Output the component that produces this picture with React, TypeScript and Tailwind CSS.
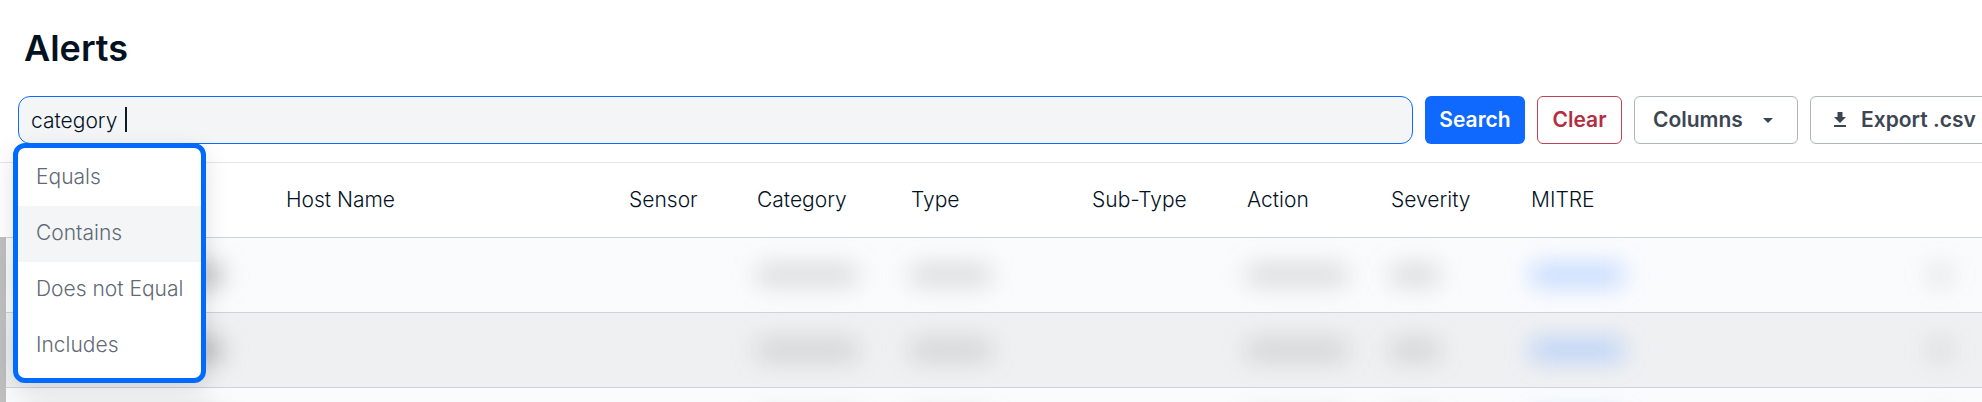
import { useState } from 'react';

const OPERATORS = ['Equals', 'Contains', 'Does not Equal', 'Includes'];

const COLUMNS = ['', 'Host Name', 'Sensor', 'Category', 'Type', 'Sub-Type', 'Action', 'Severity', 'MITRE', ''];

const ROWS = [
  { id: 1, bg: 'bg-[#fafbfd]' },
  { id: 2, bg: 'bg-[#eff0f2]' },
  { id: 3, bg: 'bg-[#fafbfd]' },
];

// Hidden values, one per column
const REDACTED = [
  'w-49 bg-neutral-500/50',
  '',
  '',
  'w-25 bg-neutral-500/25',
  'w-20 bg-neutral-500/25',
  '',
  'w-25 bg-neutral-500/25',
  'w-12 bg-neutral-500/25',
  'w-23 bg-blue-500/30',
  'w-5 ml-auto mr-2 bg-neutral-500/20',
];

function CaretIcon() {
  return (
    <svg width="10" height="5" viewBox="0 0 10 5" fill="currentColor" aria-hidden="true">
      <path d="M0 0h10L5 5z" />
    </svg>
  );
}

function DownloadIcon() {
  return (
    <svg width="14" height="16" viewBox="0 0 14 16" fill="currentColor" aria-hidden="true">
      <path d="M4.5 0h5v5H13l-6 6-6-6h3.5z M1 13h12v2H1z" />
    </svg>
  );
}

export default function App() {
  const [query, setQuery] = useState('category ');
  const [active, setActive] = useState('Contains');

  return (
    <div className="h-screen overflow-hidden bg-white font-[Inter,sans-serif] text-[21px] leading-7 text-[#04121f]">
      <h1 className="pt-6 pl-6 text-4xl leading-12 font-semibold">Alerts</h1>

      <div className="mt-6 flex gap-3 pl-[18px]">
        <div className="relative min-w-0 flex-1">
          <input
            type="text"
            aria-label="Search alerts"
            className="h-12 w-full rounded-xl border border-[#0f69ff] bg-[#f4f5f7] px-3 font-light caret-transparent outline-none"
            value={query}
            onChange={(e) => setQuery(e.target.value)}
          />
          <span className="absolute top-[11px] left-[107px] h-[25px] w-0.5 bg-[#0c1b2a]" />
          <div
            role="listbox"
            aria-label="Operators"
            className="absolute top-[47px] -left-[5px] z-10 w-[193px] rounded-xl border-5 border-[#006aff] bg-white pt-0.5 pb-1 shadow-[0_8px_24px_rgba(0,0,0,0.12)]"
          >
            {OPERATORS.map((op) => (
              <button
                key={op}
                role="option"
                aria-selected={op === active}
                className={`block h-14 w-full pb-0.5 pl-[18px] text-left font-light whitespace-nowrap text-[#5f6a75] ${
                  op === active ? 'bg-[#f4f5f7]' : ''
                }`}
                onMouseEnter={() => setActive(op)}
                onClick={() => setQuery(`${query}${op} `)}
              >
                {op}
              </button>
            ))}
          </div>
        </div>
        <button className="h-12 w-[100px] rounded-md bg-[#0f69ff] font-semibold text-white">Search</button>
        <button className="h-12 w-[85px] rounded-md border border-[#bf4258] font-semibold text-[#b32d42]">Clear</button>
        <button className="flex h-12 w-[164px] items-center gap-5 rounded-md border border-[#adb4be] pl-[18px] font-semibold text-[#3c4653]">
          Columns
          <CaretIcon />
        </button>
        <button className="-mr-4 flex h-12 w-[188px] shrink-0 items-center gap-3.5 rounded-md border border-[#adb4be] pl-[22px] font-semibold whitespace-nowrap text-[#3c4653]">
          <DownloadIcon />
          Export .csv
        </button>
      </div>

      <div className="mt-[18px] border-t border-[#e4e6e8]">
        <table className="w-full table-fixed border-collapse">
          <colgroup>
            <col className="w-[259px]" />
            <col className="w-[343px]" />
            <col className="w-32" />
            <col className="w-[154px]" />
            <col className="w-[181px]" />
            <col className="w-[155px]" />
            <col className="w-36" />
            <col className="w-[140px]" />
            <col className="w-40" />
            <col />
          </colgroup>
          <thead>
            <tr className="h-[74px] border-b border-[#d0d3d6]">
              {COLUMNS.map((name, i) => (
                <th key={i} className="px-6 text-left font-light whitespace-nowrap">
                  {name}
                </th>
              ))}
            </tr>
          </thead>
          <tbody>
            {ROWS.map((row) => (
              <tr key={row.id} className={`h-[75px] border-b border-[#d0d3d6] ${row.bg}`}>
                {REDACTED.map((shape, i) => (
                  <td key={i} className={i === 0 ? 'border-l-6 border-[#bfbfbf] pl-5' : 'px-6'}>
                    {shape && <div className={`h-5 blur-[12px] ${shape}`} />}
                  </td>
                ))}
              </tr>
            ))}
          </tbody>
        </table>
      </div>
    </div>
  );
}
